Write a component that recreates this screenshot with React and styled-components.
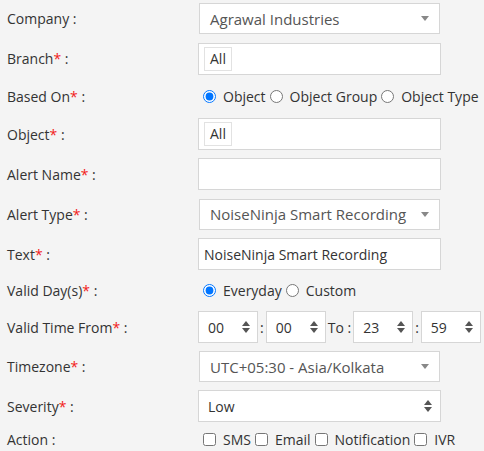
import React from 'react'
import styled, { createGlobalStyle } from 'styled-components'

const GlobalStyle = createGlobalStyle`
  body {
    margin: 0;
    background: #f4f4f4;
    font-family: 'Open Sans', 'Liberation Sans', sans-serif;
    font-size: 14px;
    color: #333;
  }
`

const Form = styled.div`
  display: flex;
  flex-direction: column;
  gap: 8px;
  padding: 3px 0 0 7px;
`

const Row = styled.div`
  display: flex;
  align-items: center;
  height: ${(p) => p.h || 32}px;
`

const Label = styled.div`
  width: 191px;
  flex-shrink: 0;
  white-space: nowrap;
`

const Star = styled.span`
  color: #f21b1b;
`

const Input = styled.div`
  box-sizing: border-box;
  width: 243px;
  height: 32px;
  background: #fff;
  border: 1px solid #d6d6d6;
  display: flex;
  align-items: center;
  padding: 0 5px;
  white-space: nowrap;
`

const Chip = styled.span`
  border: 1px solid #e2e2e2;
  padding: 0 5px;
  line-height: 22px;
  background: #fff;
`

const SelectBox = styled.div`
  box-sizing: border-box;
  width: ${(p) => p.w || 241}px;
  height: ${(p) => p.h || 31}px;
  flex-shrink: 0;
  margin-left: ${(p) => (p.inset ? 1 : 0)}px;
  background: #fff;
  border: 1px solid #d6d6d6;
  display: flex;
  align-items: center;
  justify-content: space-between;
  padding: ${(p) => p.pad || '0 10px 0 10px'};
  font-size: ${(p) => p.fs || 14}px;
  color: ${(p) => p.c || '#333'};
  white-space: nowrap;
`

const Choices = styled.div`
  display: flex;
  align-items: center;
  white-space: nowrap;
`

const Choice = styled.label`
  display: inline-flex;
  align-items: center;
  input {
    margin: 0 7px 0 ${(p) => (p.first ? 5 : 4)}px;
    width: 13px;
    height: 13px;
  }
`

const Sep = styled.span`
  margin: 0 2px;
`

const Caret = () => (
  <svg width="8" height="5" viewBox="0 0 8 5">
    <path d="M0 0 L8 0 L4 5 Z" fill="#888" />
  </svg>
)

const Spin = () => (
  <svg width="8" height="12" viewBox="0 0 8 12">
    <path d="M0 5 L4 0 L8 5 Z" fill="#555" />
    <path d="M0 7 L4 12 L8 7 Z" fill="#555" />
  </svg>
)

const Field = ({ label, req, h, children }) => (
  <Row h={h}>
    <Label>
      {label}
      {req && <Star>*</Star>} :
    </Label>
    {children}
  </Row>
)

const Time = ({ v }) => (
  <SelectBox w={60} h={32} pad="0 7px 0 9px">
    {v}
    <Spin />
  </SelectBox>
)

export default function App() {
  return (
    <>
      <GlobalStyle />
      <Form>
        <Field label="Company" h={31}>
          <SelectBox inset fs={15} c="#555">
            Agrawal Industries
            <Caret />
          </SelectBox>
        </Field>
        <Field label="Branch" req h={33}>
          <Input>
            <Chip>All</Chip>
          </Input>
        </Field>
        <Field label="Based On" req h={27}>
          <Choices>
            <Choice first>
              <input type="radio" name="based" defaultChecked />
              Object
            </Choice>
            <Choice>
              <input type="radio" name="based" />
              Object Group
            </Choice>
            <Choice>
              <input type="radio" name="based" />
              Object Type
            </Choice>
          </Choices>
        </Field>
        <Field label="Object" req>
          <Input>
            <Chip>All</Chip>
          </Input>
        </Field>
        <Field label="Alert Name" req>
          <Input />
        </Field>
        <Field label="Alert Type" req>
          <SelectBox inset fs={15} c="#555">
            NoiseNinja Smart Recording
            <Caret />
          </SelectBox>
        </Field>
        <Field label="Text" req>
          <Input>NoiseNinja Smart Recording</Input>
        </Field>
        <Field label="Valid Day(s)" req h={25}>
          <Choices>
            <Choice first>
              <input type="radio" name="days" defaultChecked />
              Everyday
            </Choice>
            <Choice>
              <input type="radio" name="days" />
              Custom
            </Choice>
          </Choices>
        </Field>
        <Field label="Valid Time From" req>
          <Choices>
            <Time v="00" />
            <Sep>:</Sep>
            <Time v="00" />
            <Sep>To :</Sep>
            <Time v="23" />
            <Sep>:</Sep>
            <Time v="59" />
          </Choices>
        </Field>
        <Field label="Timezone" req h={31}>
          <SelectBox inset fs={15} c="#555">
            UTC+05:30 - Asia/Kolkata
            <Caret />
          </SelectBox>
        </Field>
        <Field label="Severity" req>
          <SelectBox w={243} h={32} pad="0 8px 0 9px">
            Low
            <Spin />
          </SelectBox>
        </Field>
        <Field label="Action" h={18}>
          <Choices>
            <Choice first>
              <input type="checkbox" />
              SMS
            </Choice>
            <Choice>
              <input type="checkbox" />
              Email
            </Choice>
            <Choice>
              <input type="checkbox" />
              Notification
            </Choice>
            <Choice>
              <input type="checkbox" />
              IVR
            </Choice>
          </Choices>
        </Field>
      </Form>
    </>
  )
}
